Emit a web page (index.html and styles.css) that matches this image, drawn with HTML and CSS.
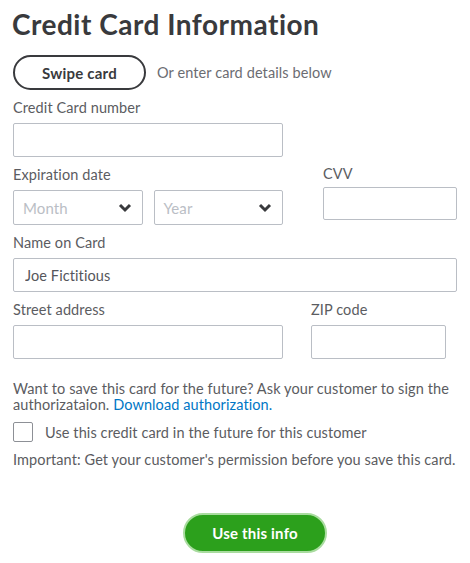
FILE: index.html
```html
<!DOCTYPE html>
<html lang="en">
<head>
  <meta charset="UTF-8">
  <title>Credit Card Information</title>
  <link rel="stylesheet" href="styles.css">
</head>
<body>

<div class="card-form">
  <h1 class="title">Credit Card Information</h1>

  <div class="swipe-row">
    <button class="swipe-btn">Swipe card</button>
    <span class="swipe-hint">Or enter card details below</span>
  </div>

  <div class="row">
    <div class="field w-number">
      <label>Credit Card number</label>
      <input type="text">
    </div>
  </div>

  <div class="row">
    <div class="field w-exp">
      <label>Expiration date</label>
      <div class="exp-selects">
        <div class="select">
          <span class="placeholder">Month</span>
          <svg class="chev" width="14" height="10" viewBox="0 0 14 10"><path d="M2 2 L7 7 L12 2" fill="none" stroke="#393a3d" stroke-width="3"/></svg>
        </div>
        <div class="select">
          <span class="placeholder">Year</span>
          <svg class="chev" width="14" height="10" viewBox="0 0 14 10"><path d="M2 2 L7 7 L12 2" fill="none" stroke="#393a3d" stroke-width="3"/></svg>
        </div>
      </div>
    </div>
    <div class="field w-cvv cvv">
      <label>CVV</label>
      <input type="text">
    </div>
  </div>

  <div class="row">
    <div class="field w-full">
      <label>Name on Card</label>
      <input type="text" value="Joe Fictitious">
    </div>
  </div>

  <div class="row">
    <div class="field w-number">
      <label>Street address</label>
      <input type="text">
    </div>
    <div class="field w-zip">
      <label>ZIP code</label>
      <input type="text">
    </div>
  </div>

  <p class="note">Want to save this card for the future? Ask your customer to sign the authorizataion. <a href="#">Download authorization.</a></p>

  <label class="check-row">
    <span class="checkbox"></span>
    Use this credit card in the future for this customer
  </label>

  <p class="note important">Important: Get your customer's permission before you save this card.</p>

  <div class="actions">
    <button class="use-btn">Use this info</button>
  </div>
</div>

</body>
</html>
```

FILE: styles.css
```css
body {
  margin: 0;
  background: #fff;
  font-family: Lato, "Open Sans", sans-serif;
  color: #393a3d;
  letter-spacing: 0.1px;
}

.card-form {
  padding: 6px 13px 0 13px;
}

.title {
  font-size: 28px;
  font-weight: 700;
  line-height: 36px;
  margin: 0 0 13px -1px;
  color: #393a3d;
  letter-spacing: 0.5px;
}

.swipe-row {
  display: flex;
  align-items: center;
  gap: 11px;
  margin-bottom: 9px;
}

.swipe-btn {
  width: 133px;
  height: 35px;
  border: 2px solid #393a3d;
  border-radius: 18px;
  background: #fff;
  font-family: inherit;
  font-size: 15px;
  font-weight: 700;
  letter-spacing: 0.2px;
  color: #393a3d;
}

.swipe-hint {
  font-size: 14.5px;
  color: #6b6c72;
}

.row {
  display: flex;
  margin-bottom: 9px;
}

.field label {
  display: block;
  font-size: 14.5px;
  line-height: 18px;
  color: #5b5c61;
  margin-bottom: 6px;
}

.field input {
  box-sizing: border-box;
  width: 100%;
  height: 34px;
  border: 1px solid #babec5;
  border-radius: 2px;
  padding: 0 11px;
  font-family: inherit;
  font-size: 14.5px;
  letter-spacing: 0.1px;
  color: #55565b;
}

.w-number { width: 270px; }
.w-exp { width: 270px; }
.w-cvv { width: 134px; margin-left: 40px; }
.w-full { width: 444px; }
.w-zip { width: 135px; margin-left: 28px; }

.cvv { margin-top: -1px; }
.cvv label { margin-bottom: 4px; }
.cvv input { height: 33px; }

.exp-selects {
  display: flex;
  gap: 11px;
}

.select {
  box-sizing: border-box;
  flex: 1;
  height: 35px;
  border: 1px solid #babec5;
  border-radius: 2px;
  display: flex;
  align-items: center;
  justify-content: space-between;
  padding: 0 10px 0 9px;
}

.placeholder {
  font-size: 15px;
  color: #babec5;
}

.note {
  font-size: 14.5px;
  line-height: 16px;
  color: #5b5c61;
  margin: 22px 0 9px 0;
}

.note a {
  color: #0077c5;
  text-decoration: none;
}

.check-row {
  display: flex;
  align-items: center;
  gap: 12px;
  font-size: 14.5px;
  color: #5b5c61;
}

.checkbox {
  box-sizing: border-box;
  width: 20px;
  height: 20px;
  border: 1px solid #8d9096;
  border-radius: 2px;
}

.important {
  margin: 10px 0 0 0;
  white-space: nowrap;
}

.actions {
  display: flex;
  justify-content: center;
  padding-left: 40px;
  margin-top: 45px;
}

.use-btn {
  width: 144px;
  height: 40px;
  border: 2px solid #a9dc9f;
  border-radius: 20px;
  background: #2ca01c;
  box-shadow: inset 0 0 0 1px #2ca01c;
  color: #fff;
  font-family: inherit;
  font-size: 15px;
  font-weight: 700;
  letter-spacing: 0.2px;
}
```
